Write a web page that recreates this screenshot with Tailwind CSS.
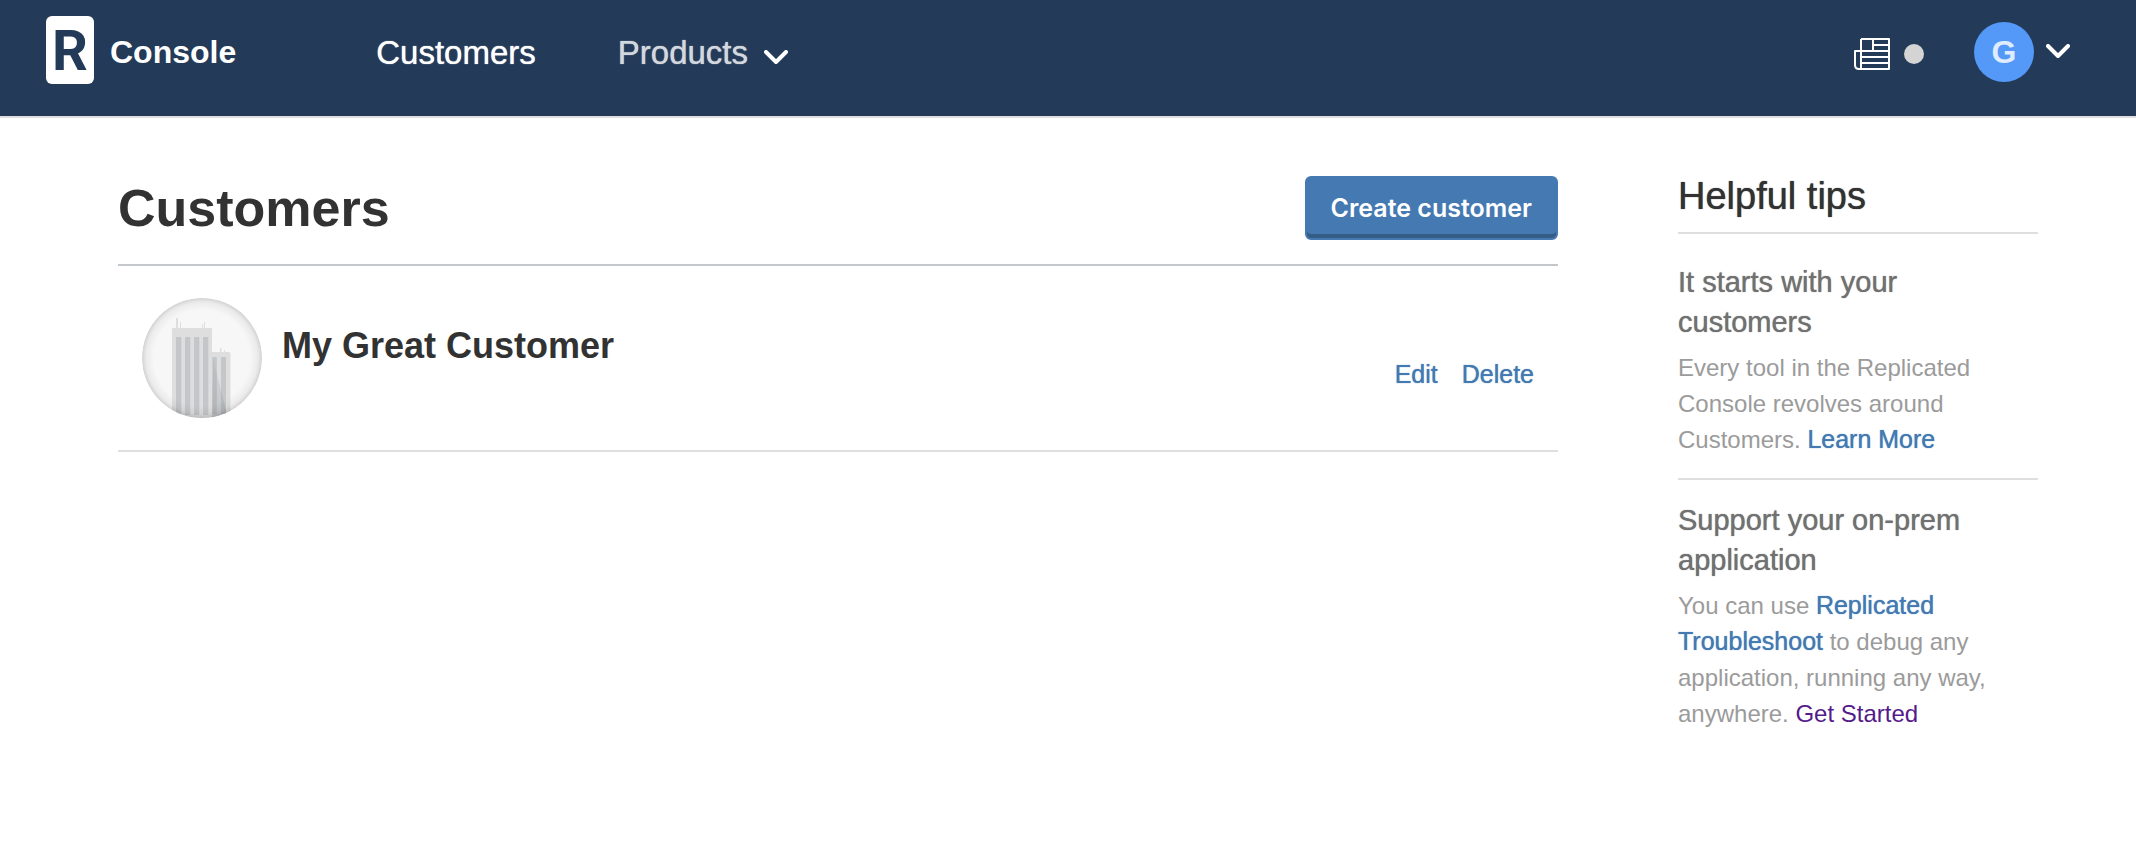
<!DOCTYPE html>
<html lang="en">
<head>
<meta charset="utf-8">
<meta name="viewport" content="width=device-width, initial-scale=1">
<title>Console - Customers</title>
<script src="https://cdn.jsdelivr.net/npm/@tailwindcss/browser@4"></script>
</head>
<body class="min-h-screen bg-white font-['Liberation_Sans',Arial,sans-serif] text-[#323232]">
<header class="flex items-center justify-between border-b-2 border-[#dfdfdf] bg-[#233b58] pt-4 pr-[66px] pb-7 pl-[46px] text-white">
  <div class="flex items-center">
    <a href="#" class="flex items-center gap-4">
      <span class="mb-1 flex h-[68px] w-12 items-center justify-center rounded-md bg-white pt-0.5 font-['Liberation_Sans_Narrow','Roboto',sans-serif] text-[56px] leading-none font-bold text-[#233b58]">R</span>
      <span class="text-[32px] leading-9 font-bold">Console</span>
    </a>
    <nav class="ml-[140px] flex items-center gap-[82px] pt-0.5 text-[33px] leading-9">
      <a href="#" class="[text-shadow:0_0_1px_currentColor]">Customers</a>
      <button type="button" class="flex items-center gap-4 text-[#d3d8de]">
        <span class="[text-shadow:0_0_1px_currentColor]">Products</span>
        <svg class="mt-2 h-[14px] w-6" viewBox="0 0 24 14" fill="none" stroke="#fff" stroke-width="4" stroke-linecap="round" stroke-linejoin="round" aria-hidden="true"><path d="M2 2L12 12L22 2"/></svg>
      </button>
    </nav>
  </div>
  <div class="flex items-center">
    <button type="button" aria-label="News" class="mt-1 flex items-center gap-[14px]">
      <svg class="h-8 w-9" viewBox="0 0 36 32" fill="none" stroke="#fff" stroke-width="2" stroke-linejoin="round" aria-hidden="true"><path d="M7 1H35V31H5Q1 31 1 27V13H7M7 1V31M19 1V13M19 7H35M7 13H35M7 19H35M7 25H35"/></svg>
      <span class="size-5 rounded-full bg-[#d4d4d4]"></span>
    </button>
    <button type="button" aria-label="Account menu" class="ml-[50px] flex items-center gap-3">
      <span class="flex size-[60px] items-center justify-center rounded-full bg-[#5499f7] text-[32px] leading-9 font-bold text-[#dfebfe]">G</span>
      <svg class="mb-0.5 h-[14px] w-6" viewBox="0 0 24 14" fill="none" stroke="#fff" stroke-width="4" stroke-linecap="round" stroke-linejoin="round" aria-hidden="true"><path d="M2 2L12 12L22 2"/></svg>
    </button>
  </div>
</header>

<div class="flex items-start gap-[120px] pt-[58px] pr-[98px] pb-12 pl-[118px]">
  <main class="flex-1">
    <div class="flex items-center justify-between border-b-2 border-[#c4c8cc] pb-6">
      <h1 class="text-[52px] leading-[64px] font-bold">Customers</h1>
      <button type="button" class="rounded-md border-2 border-[#4479b1] bg-[#4479b1] px-6 py-3.5 font-['Inter',sans-serif] text-[25px] leading-8 font-semibold text-white shadow-[inset_0_-4px_0_#355c85]">Create customer</button>
    </div>
    <ul>
      <li class="flex items-start border-b-2 border-[#dfdfdf] px-6 py-8">
        <svg class="size-[120px] rounded-full" viewBox="0 0 120 120" aria-hidden="true">
          <defs>
            <radialGradient id="rim"><stop offset=".8" stop-color="#000" stop-opacity="0"/><stop offset=".93" stop-color="#000" stop-opacity=".05"/><stop offset="1" stop-color="#000" stop-opacity=".15"/></radialGradient>
            <linearGradient id="shade" x1="0" y1="0" x2="0" y2="1"><stop offset="0" stop-color="#8b9299" stop-opacity=".1"/><stop offset="1" stop-color="#8b9299" stop-opacity=".35"/></linearGradient>
          </defs>
          <rect width="120" height="120" fill="#f7f7f7"/>
          <path fill="#dedede" d="M30 120V31Q30 30 31 30H34V20H36V30H38V24H39V30H60V26H61V30H62V24H63V30H69Q70 30 70 31V54H78V50H79.5V54H82V52H83V54H87Q88.500 54 88.500 56V120Z"/>
          <path fill="#c3c7ca" d="M34 39h5.300v78H34zM43 39h5.300v78H43zM52 39h5.300v78H52zM61 39h5.300v78H61zM70.300 59h4.500v57h-4.500zM79 59h5v57h-5z"/>
          <path fill="url(#shade)" d="M71 60L84 112V116L70 120Z"/>
          <circle cx="60" cy="60" r="60" fill="url(#rim)"/>
        </svg>
        <h2 class="ml-5 flex-1 pt-7 text-[36px] leading-10 font-bold">My Great Customer</h2>
        <div class="flex gap-6 pt-[58px] text-[25px] leading-9 text-[#4479b1] [text-shadow:0_0_1px_currentColor]">
          <a href="#">Edit</a>
          <a href="#">Delete</a>
        </div>
      </li>
    </ul>
  </main>

  <aside class="w-[360px] shrink-0">
    <h2 class="mb-2 border-b-2 border-[#dfdfdf] pb-4 text-[38px] leading-10 [text-shadow:0_0_1px_currentColor]">Helpful tips</h2>
    <section class="border-b-2 border-[#dfdfdf] py-5">
      <h3 class="mb-2 text-[29px] leading-10 text-[#717171] [text-shadow:0_0_1px_currentColor]">It starts with your customers</h3>
      <p class="text-2xl leading-9 text-[#9b9b9b]">Every tool in the Replicated Console revolves around Customers. <a href="#" class="text-[25px] leading-8 text-[#4479b1] [text-shadow:0_0_1px_currentColor]">Learn More</a></p>
    </section>
    <section class="py-5">
      <h3 class="mb-2 text-[29px] leading-10 text-[#717171] [text-shadow:0_0_1px_currentColor]">Support your on-prem application</h3>
      <p class="text-2xl leading-9 text-[#9b9b9b]">You can use <a href="#" class="text-[25px] leading-8 text-[#4479b1] [text-shadow:0_0_1px_currentColor]">Replicated Troubleshoot</a> to debug any application, running any way, anywhere. <a href="#" class="text-[#551a8b]">Get Started</a></p>
    </section>
  </aside>
</div>
</body>
</html>
